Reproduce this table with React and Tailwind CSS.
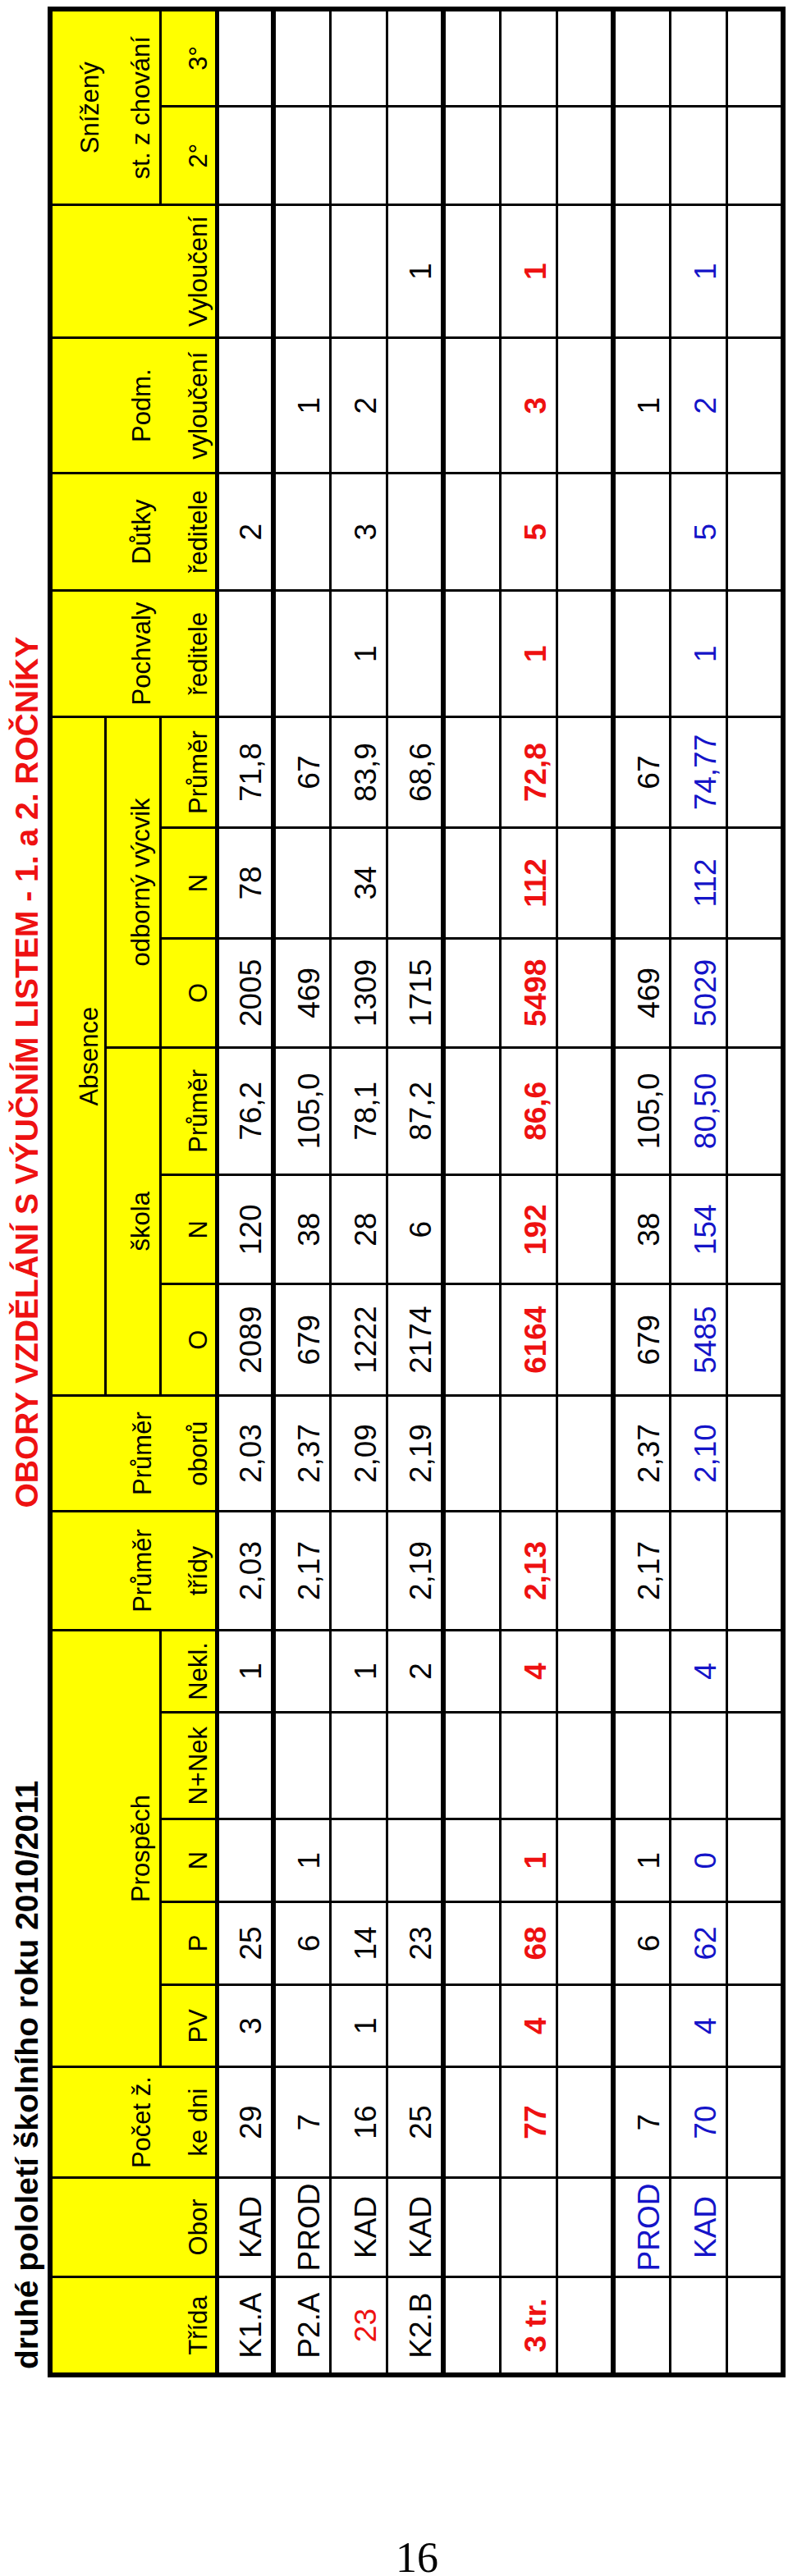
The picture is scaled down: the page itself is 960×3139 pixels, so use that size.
import React from 'react'

// Widths of the 22 columns, read from left to right once the sheet is turned upright.
const COLS = [
  'w-[119px]', 'w-[121px]', 'w-[134px]', 'w-[100px]', 'w-[101px]', 'w-[100px]', 'w-[130px]', 'w-[100px]',
  'w-[144px]', 'w-[141px]', 'w-[135px]', 'w-[133px]', 'w-[155px]', 'w-[132px]', 'w-[135px]', 'w-[134px]',
  'w-[154px]', 'w-[142px]', 'w-[165px]', 'w-[161px]', 'w-[120px]', 'w-[118px]',
]

const BX = 'border-x-[3px] border-black'
const RED = 'text-[#ee1111]'
const BLUE = 'text-[#1414c8]'
const EMPTY = Array(22).fill('')

const rows = [
  { cells: ['K1.A', 'KAD', '29', '3', '25', '', '', '1', '2,03', '2,03', '2089', '120', '76,2', '2005', '78', '71,8', '', '2', '', '', '', ''], thick: true },
  { cells: ['P2.A', 'PROD', '7', '', '6', '1', '', '', '2,17', '2,37', '679', '38', '105,0', '469', '', '67', '', '', '1', '', '', ''] },
  { cells: ['23', 'KAD', '16', '1', '14', '', '', '1', '', '2,09', '1222', '28', '78,1', '1309', '34', '83,9', '1', '3', '2', '', '', ''], colored: { 0: RED } },
  { cells: ['K2.B', 'KAD', '25', '', '23', '', '', '2', '2,19', '2,19', '2174', '6', '87,2', '1715', '', '68,6', '', '', '', '1', '', ''], thick: true },
  { cells: EMPTY },
  { cells: ['3 tr.', '', '77', '4', '68', '1', '', '4', '2,13', '', '6164', '192', '86,6', '5498', '112', '72,8', '1', '5', '3', '1', '', ''], tone: RED + ' font-bold' },
  { cells: EMPTY, thick: true },
  { cells: ['', 'PROD', '7', '', '6', '1', '', '', '2,17', '2,37', '679', '38', '105,0', '469', '', '67', '', '', '1', '', '', ''], colored: { 1: BLUE } },
  { cells: ['', 'KAD', '70', '4', '62', '0', '', '4', '', '2,10', '5485', '154', '80,50', '5029', '112', '74,77', '1', '5', '2', '1', '', ''], tone: BLUE },
  { cells: EMPTY },
]

function H({ children, className = '', ...rest }) {
  return (
    <th
      {...rest}
      className={'p-0 bg-[#ffff00] text-center align-bottom whitespace-nowrap font-normal text-[31px] leading-[36px] ' + className}
    >
      {children}
    </th>
  )
}

function HeaderRows() {
  const c = BX + ' border-b-[5px] pb-[2px]'
  return (
    <>
      <tr className="h-[67px]">
        <H className={BX} />
        <H className={BX} />
        <H className={BX} />
        <H colSpan={5} rowSpan={2} className={BX + ' border-b-[3px] pb-[4px]'}>Prospěch</H>
        <H className={BX} />
        <H className={BX} />
        <H colSpan={6} className={BX + ' border-b-[3px]'}>Absence</H>
        <H className={BX} />
        <H className={BX} />
        <H className={BX} />
        <H className={BX} />
        <H colSpan={2} className={BX}>Snížený</H>
      </tr>
      <tr className="h-[67px]">
        <H className={BX} />
        <H className={BX} />
        <H className={BX + ' pb-[4px]'}>Počet ž.</H>
        <H className={BX + ' pb-[3px]'}>Průměr</H>
        <H className={BX + ' pb-[3px]'}>Průměr</H>
        <H colSpan={3} className={BX + ' border-b-[3px] pb-[4px]'}>škola</H>
        <H colSpan={3} className={BX + ' border-b-[3px] pb-[4px]'}>odborný výcvik</H>
        <H className={BX + ' pb-[4px]'}>Pochvaly</H>
        <H className={BX + ' pb-[4px]'}>Důtky</H>
        <H className={BX + ' pb-[4px]'}>Podm.</H>
        <H className={BX} />
        <H colSpan={2} className={BX + ' border-b-[3px] pb-[4px]'}>st. z chování</H>
      </tr>
      <tr className="h-[69px]">
        <H className={c}>Třída</H>
        <H className={c}>Obor</H>
        <H className={c}>ke dni</H>
        <H className={c}>PV</H>
        <H className={c}>P</H>
        <H className={c}>N</H>
        <H className={c}>N+Nek</H>
        <H className={c}>Nekl.</H>
        <H className={c}>třídy</H>
        <H className={c}>oborů</H>
        <H className={c}>O</H>
        <H className={c}>N</H>
        <H className={c}>Průměr</H>
        <H className={c}>O</H>
        <H className={c}>N</H>
        <H className={c}>Průměr</H>
        <H className={c}>ředitele</H>
        <H className={c}>ředitele</H>
        <H className={c}>vyloučení</H>
        <H className={c}>Vyloučení</H>
        <H className={c}>2°</H>
        <H className={c}>3°</H>
      </tr>
    </>
  )
}

export default function App() {
  return (
    <div className="w-[960px] h-[3139px] overflow-hidden bg-white text-black font-['Liberation_Sans',Arial,sans-serif]">
      <div className="h-[3095px]">
        {/* the whole sheet is printed sideways: turned a quarter to the left */}
        <div className="w-[2897px] h-[960px] origin-top-left -rotate-90 translate-y-[2897px]">
          <div className="flex h-[58px] items-end pb-[3px] text-[39px] font-bold leading-[45px] whitespace-nowrap">
            <span className="ml-[10px]">druhé pololetí školního roku 2010/2011</span>
            <span className={'ml-[332px] ' + RED}>OBORY VZDĚLÁNÍ S VÝUČNÍM LISTEM - 1. a 2. ROČNÍKY</span>
          </div>
          <table className="w-[2889px] table-fixed border-collapse border-[6px] border-black">
            <colgroup>
              {COLS.map((w, i) => <col key={i} className={w} />)}
            </colgroup>
            <thead>
              <HeaderRows />
            </thead>
            <tbody>
              {rows.map((r, ri) => (
                <tr key={ri} className="h-[69px]">
                  {r.cells.map((v, ci) => (
                    <td
                      key={ci}
                      className={
                        'p-0 pb-[3px] text-center align-bottom whitespace-nowrap text-[37px] leading-[42px] ' +
                        BX + ' ' + (r.thick ? 'border-b-[6px]' : 'border-b-[3px]') + ' ' +
                        (r.tone || (r.colored && r.colored[ci]) || '')
                      }
                    >
                      {v}
                    </td>
                  ))}
                </tr>
              ))}
            </tbody>
          </table>
        </div>
      </div>
      <div className="pl-[56px] text-center font-['Liberation_Serif',serif] text-[52px] leading-[44px]">16</div>
    </div>
  )
}
